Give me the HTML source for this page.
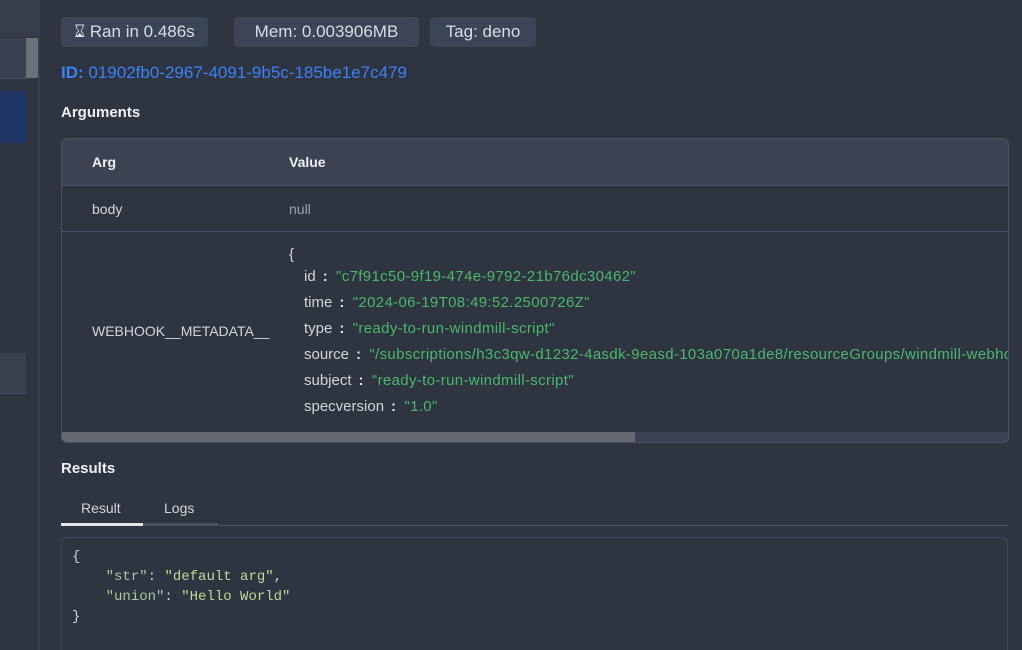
<!DOCTYPE html>
<html><head><style>
html,body{margin:0;width:1022px;height:650px;overflow:hidden}
body{background:#2e3440;font-family:"Liberation Sans",sans-serif;color:#e5e7eb;position:relative}
.a{position:absolute}
.badge{position:absolute;top:17px;height:30px;background:#3b4556;border-radius:4px;font-size:17px;line-height:30px;color:#d8dce3;text-align:center;box-sizing:border-box}
.h{font-size:15px;font-weight:bold;color:#eef0f3}
.k{color:#d1d5db;font-size:14px}
.s{color:#4ab86c}
.c{color:#e5e7eb;margin:0 8px 0 7px;font-weight:bold}
.row{position:absolute;left:304px;height:20px;font-size:15px;letter-spacing:0.35px;white-space:nowrap}
.row .k{font-size:15px;letter-spacing:0}
</style></head><body>
<div class="a" style="left:0;top:0;width:38px;height:650px;background:#2e3440;border-right:2px solid #363e4e"></div>
<div class="a" style="left:0;top:0;width:38px;height:37px;background:#363c49"></div>
<div class="a" style="left:0;top:38px;width:26px;height:40px;background:#394050;border-bottom:1px solid #4a5262"></div>
<div class="a" style="left:26px;top:38px;width:12px;height:40px;background:#6b7079"></div>
<div class="a" style="left:0;top:91px;width:26px;height:52px;background:#1f3566"></div>
<div class="a" style="left:0;top:353px;width:26px;height:40px;background:#393f4c;border-bottom:1px solid #4a5262"></div>

<div class="badge" style="left:61px;width:147px">&#8987;&#xFE0E; Ran in 0.486s</div>
<div class="badge" style="left:234px;width:185px">Mem: 0.003906MB</div>
<div class="badge" style="left:430px;width:106px">Tag: deno</div>
<div class="a" style="left:61px;top:63px;font-size:17px;color:#3b82f6"><b>ID:</b> 01902fb0-2967-4091-9b5c-185be1e7c479</div>
<div class="a h" style="left:61px;top:104px">Arguments</div>

<div class="a" style="left:61px;top:138px;width:948px;height:305px;border:1px solid #4a5263;border-radius:6px;overflow:hidden;box-sizing:border-box">
 <div class="a" style="left:0;top:0;width:100%;height:46px;background:#3b4252;border-bottom:1px solid #4a5263"></div>
 <div class="a h" style="left:30px;top:15px;font-size:14px">Arg</div>
 <div class="a h" style="left:227px;top:15px;font-size:14px">Value</div>
 <div class="a" style="left:0;top:92px;width:100%;border-top:1px solid #4a5263"></div>
 <div class="a k" style="left:30px;top:62px">body</div>
 <div class="a" style="left:227px;top:62px;font-size:14px;color:#9ca3af">null</div>
 <div class="a k" style="left:30px;top:184px">WEBHOOK__METADATA__</div>
 <div class="row k" style="left:227px;top:107px">{</div>
 <div class="row" style="left:242px;top:129px"><span class="k">id</span><span class="c">:</span><span class="s">"c7f91c50-9f19-474e-9792-21b76dc30462"</span></div>
 <div class="row" style="left:242px;top:155px"><span class="k">time</span><span class="c">:</span><span class="s">"2024-06-19T08:49:52.2500726Z"</span></div>
 <div class="row" style="left:242px;top:181px"><span class="k">type</span><span class="c">:</span><span class="s">"ready-to-run-windmill-script"</span></div>
 <div class="row" style="left:242px;top:207px"><span class="k">source</span><span class="c">:</span><span class="s">"/subscriptions/h3c3qw-d1232-4asdk-9easd-103a070a1de8/resourceGroups/windmill-webhook-test</span></div>
 <div class="row" style="left:242px;top:233px"><span class="k">subject</span><span class="c">:</span><span class="s">"ready-to-run-windmill-script"</span></div>
 <div class="row" style="left:242px;top:259px"><span class="k">specversion</span><span class="c">:</span><span class="s">"1.0"</span></div>
 <div class="a" style="left:0;top:293px;width:100%;height:11px;background:#3b4252"></div>
 <div class="a" style="left:0;top:293px;width:573px;height:11px;background:#636872"></div>
</div>

<div class="a h" style="left:61px;top:460px">Results</div>
<div class="a" style="left:61px;top:525px;width:947px;height:1px;background:#4a5263"></div>
<div class="a" style="left:61px;top:523px;width:82px;height:3px;background:#e5e7eb"></div>
<div class="a" style="left:143px;top:523px;width:75px;height:3px;background:#4a5263"></div>
<div class="a k" style="left:81px;top:500px">Result</div>
<div class="a k" style="left:164px;top:500px">Logs</div>
<div class="a" style="left:61px;top:537px;width:947px;height:130px;border:1px solid #404858;border-radius:6px;box-sizing:border-box"></div>
<pre class="a" style="left:72px;top:547px;margin:0;font-family:'Liberation Mono',monospace;font-size:14px;line-height:20px;color:#d1d5db">{
    <span style="color:#a8c8a0">"str"</span>: <span style="color:#c3d69b">"default arg"</span>,
    <span style="color:#a8c8a0">"union"</span>: <span style="color:#c3d69b">"Hello World"</span>
}</pre>
</body></html>
